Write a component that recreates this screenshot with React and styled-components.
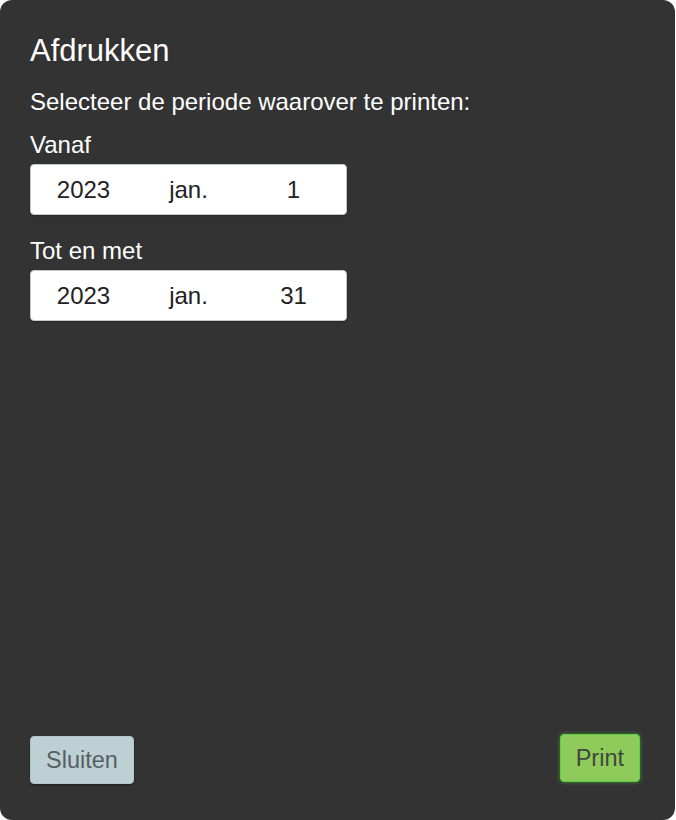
import React from "react";
import styled, { createGlobalStyle } from "styled-components";

const Global = createGlobalStyle`
  html, body { margin: 0; padding: 0; background: #ffffff; }
  body { font-family: "Liberation Sans", Arial, sans-serif; }
`;

const Panel = styled.div`
  box-sizing: border-box;
  width: 675px;
  height: 820px;
  background: #333333;
  border-radius: 12px;
  padding: 34px 35px 36px 30px;
  display: flex;
  flex-direction: column;
  color: #ffffff;
  font-family: "Liberation Sans", Arial, sans-serif;
`;

const Title = styled.h2`
  margin: 0;
  font-size: 31px;
  line-height: 34px;
  font-weight: 400;
`;

const Intro = styled.p`
  margin: 20px 0 0;
  font-size: 24px;
  line-height: 28px;
`;

const Field = styled.div`
  display: flex;
  flex-direction: column;
  margin-top: ${(p) => p.$gap}px;
`;

const Label = styled.label`
  font-size: 24px;
  line-height: 28px;
`;

const DateBox = styled.div`
  box-sizing: border-box;
  margin-top: 5px;
  width: 317px;
  height: 51px;
  background: #ffffff;
  border: 1px solid #c4c9cc;
  border-radius: 4px;
  display: grid;
  grid-template-columns: repeat(3, 1fr);
  align-items: center;
  box-shadow: 0 1px 2px rgba(0, 0, 0, 0.25);
`;

const Part = styled.span`
  text-align: center;
  font-size: 24px;
  color: #222222;
`;

const Spacer = styled.div`
  flex: 1;
`;

const Footer = styled.div`
  display: flex;
  justify-content: space-between;
  align-items: flex-end;
`;

const Button = styled.button`
  box-sizing: border-box;
  height: 48px;
  padding: 0 15px;
  font-family: "Liberation Sans", Arial, sans-serif;
  font-size: 23.5px;
  border-radius: 4px;
  cursor: pointer;
  background: ${(p) => (p.$primary ? "#8fcb5b" : "#bdd0d4")};
  color: ${(p) => (p.$primary ? "#40473f" : "#575f63")};
  border: 1px solid ${(p) => (p.$primary ? "#5bd13f" : "#b3c5c9")};
  box-shadow: ${(p) =>
    p.$primary
      ? "0 0 4px rgba(80, 210, 60, 0.55)"
      : "0 1px 2px rgba(0, 0, 0, 0.4)"};
  margin-bottom: ${(p) => (p.$primary ? "2px" : "0")};
`;

function DateInput({ year, month, day }) {
  return (
    <DateBox>
      <Part>{year}</Part>
      <Part>{month}</Part>
      <Part>{day}</Part>
    </DateBox>
  );
}

export default function App() {
  return (
    <>
      <Global />
      <Panel>
        <Title>Afdrukken</Title>
        <Intro>Selecteer de periode waarover te printen:</Intro>
        <Field $gap={15}>
          <Label>Vanaf</Label>
          <DateInput year="2023" month="jan." day="1" />
        </Field>
        <Field $gap={22}>
          <Label>Tot en met</Label>
          <DateInput year="2023" month="jan." day="31" />
        </Field>
        <Spacer />
        <Footer>
          <Button>Sluiten</Button>
          <Button $primary>Print</Button>
        </Footer>
      </Panel>
    </>
  );
}
